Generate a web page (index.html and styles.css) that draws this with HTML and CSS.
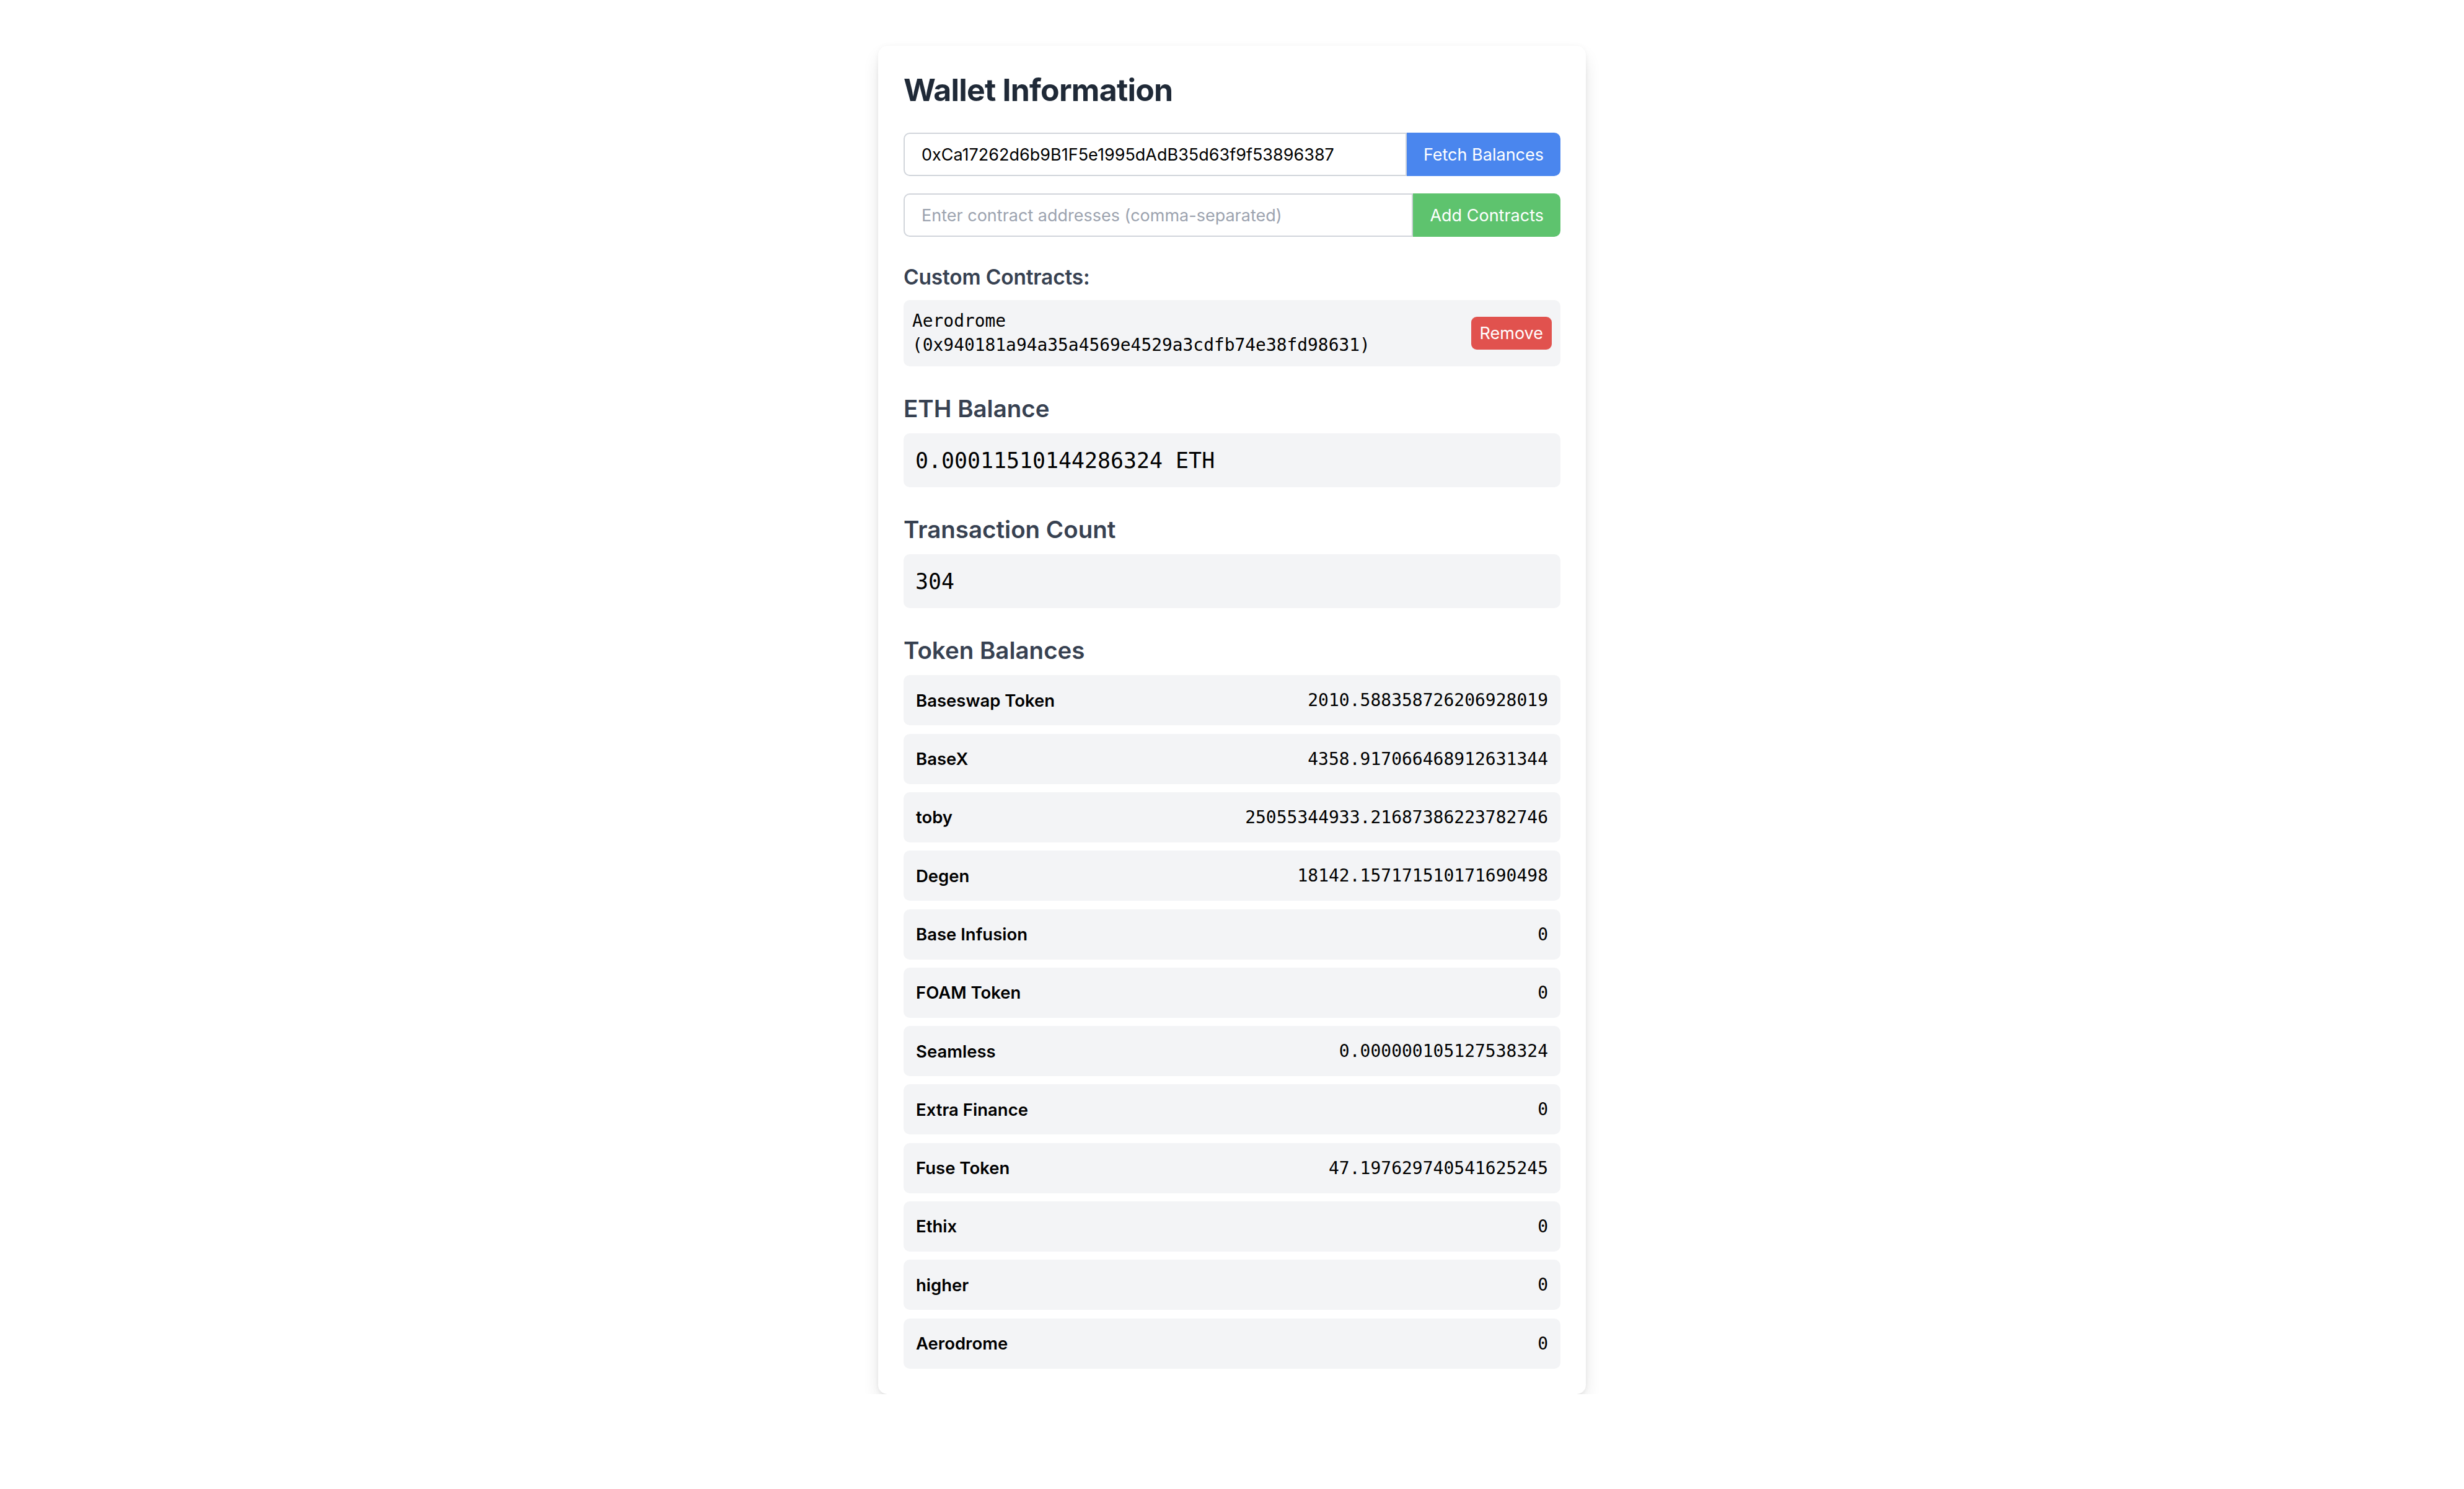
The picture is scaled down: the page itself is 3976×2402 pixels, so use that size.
FILE: index.html
```html
<!DOCTYPE html>
<html lang="en">
<head>
<meta charset="utf-8">
<title>Wallet Information</title>
<link rel="stylesheet" href="styles.css">
</head>
<body>
<div class="card">
  <h1 class="title">Wallet Information</h1>

  <div class="input-row">
    <input class="field" type="text" value="0xCa17262d6b9B1F5e1995dAdB35d63f9f53896387">
    <button class="btn btn-blue">Fetch Balances</button>
  </div>

  <div class="input-row input-row-second">
    <input class="field" type="text" placeholder="Enter contract addresses (comma-separated)">
    <button class="btn btn-green">Add Contracts</button>
  </div>

  <h3 class="subhead">Custom Contracts:</h3>
  <div class="contract">
    <span class="contract-text">Aerodrome<br>(0x940181a94a35a4569e4529a3cdfb74e38fd98631)</span>
    <button class="btn-remove">Remove</button>
  </div>

  <section class="section">
    <h2 class="heading">ETH Balance</h2>
    <div class="value-box">0.00011510144286324 ETH</div>
  </section>

  <section class="section">
    <h2 class="heading">Transaction Count</h2>
    <div class="value-box">304</div>
  </section>

  <section class="section">
    <h2 class="heading">Token Balances</h2>
    <ul class="tokens">
      <li class="token"><span class="token-name">Baseswap Token</span><span class="token-amount">2010.588358726206928019</span></li>
      <li class="token"><span class="token-name">BaseX</span><span class="token-amount">4358.917066468912631344</span></li>
      <li class="token"><span class="token-name">toby</span><span class="token-amount">25055344933.21687386223782746</span></li>
      <li class="token"><span class="token-name">Degen</span><span class="token-amount">18142.157171510171690498</span></li>
      <li class="token"><span class="token-name">Base Infusion</span><span class="token-amount">0</span></li>
      <li class="token"><span class="token-name">FOAM Token</span><span class="token-amount">0</span></li>
      <li class="token"><span class="token-name">Seamless</span><span class="token-amount">0.000000105127538324</span></li>
      <li class="token"><span class="token-name">Extra Finance</span><span class="token-amount">0</span></li>
      <li class="token"><span class="token-name">Fuse Token</span><span class="token-amount">47.197629740541625245</span></li>
      <li class="token"><span class="token-name">Ethix</span><span class="token-amount">0</span></li>
      <li class="token"><span class="token-name">higher</span><span class="token-amount">0</span></li>
      <li class="token"><span class="token-name">Aerodrome</span><span class="token-amount">0</span></li>
    </ul>
  </section>
</div>
</body>
</html>
```

FILE: styles.css
```css
* {
  box-sizing: border-box;
}

html, body {
  margin: 0;
  padding: 0;
  background: #ffffff;
}

body {
  font-family: "Inter", "Noto Sans", "Liberation Sans", sans-serif;
  color: #000000;
}

.card {
  width: 1142px;
  margin: 74px auto 0;
  padding: 41px;
  background: #ffffff;
  border-radius: 15px;
  box-shadow: 0 14px 30px -6px rgba(0, 0, 0, 0.16), 0 6px 12px -6px rgba(0, 0, 0, 0.1), 0 0 8px rgba(0, 0, 0, 0.03);
}

.title {
  margin: 0;
  font-size: 50px;
  line-height: 60px;
  font-weight: 700;
  color: #1f2937;
  letter-spacing: -0.8px;
}

.input-row {
  display: flex;
  margin-top: 39px;
  height: 70px;
}

.input-row-second {
  margin-top: 28px;
}

.field {
  flex: 1;
  min-width: 0;
  height: 70px;
  margin: 0;
  padding: 0 27px;
  border: 2px solid #d1d5db;
  border-radius: 10px 0 0 10px;
  font-family: "Inter", "Noto Sans", sans-serif;
  font-size: 27px;
  color: #000000;
  background: #ffffff;
  outline: none;
}

.field::placeholder {
  color: #9ca3af;
}

.btn {
  height: 70px;
  margin: 0;
  padding: 0 27px;
  border: none;
  border-radius: 0 10px 10px 0;
  font-family: "Inter", "Noto Sans", sans-serif;
  font-size: 27px;
  font-weight: 400;
  color: #ffffff;
  white-space: nowrap;
}

.btn-blue {
  background: #4a86ee;
}

.btn-green {
  background: #5ec36e;
}

.subhead {
  margin: 43px 0 0;
  font-size: 33.5px;
  line-height: 45px;
  font-weight: 600;
  color: #374151;
  letter-spacing: -0.2px;
}

.contract {
  display: flex;
  align-items: center;
  justify-content: space-between;
  margin-top: 14px;
  padding: 14px;
  background: #f3f4f6;
  border-radius: 10px;
}

.contract-text {
  font-family: "DejaVu Sans Mono", "Liberation Mono", monospace;
  font-size: 27.9px;
  line-height: 39.4px;
  color: #000000;
}

.btn-remove {
  height: 53px;
  margin: 0;
  padding: 0 14px;
  border: none;
  border-radius: 9px;
  background: #e1524e;
  color: #ffffff;
  font-family: "Inter", "Noto Sans", sans-serif;
  font-size: 27px;
  white-space: nowrap;
}

.section {
  margin-top: 43.5px;
}

.heading {
  margin: 0 0 14px;
  font-size: 38.5px;
  line-height: 51px;
  font-weight: 600;
  color: #374151;
}

.value-box {
  height: 86.5px;
  padding: 0 19px;
  display: flex;
  align-items: center;
  background: #f3f4f6;
  border-radius: 10px;
  font-family: "DejaVu Sans Mono", "Liberation Mono", monospace;
  font-size: 34.9px;
  color: #000000;
}

.tokens {
  list-style: none;
  margin: 0;
  padding: 0;
  display: flex;
  flex-direction: column;
  gap: 13.3px;
}

.token {
  height: 81px;
  padding: 0 20px;
  display: flex;
  align-items: center;
  justify-content: space-between;
  background: #f3f4f6;
  border-radius: 10px;
}

.token-name {
  font-size: 27.5px;
  font-weight: 600;
  color: #000000;
}

.token-amount {
  font-family: "DejaVu Sans Mono", "Liberation Mono", monospace;
  font-size: 28px;
  color: #000000;
}
```
